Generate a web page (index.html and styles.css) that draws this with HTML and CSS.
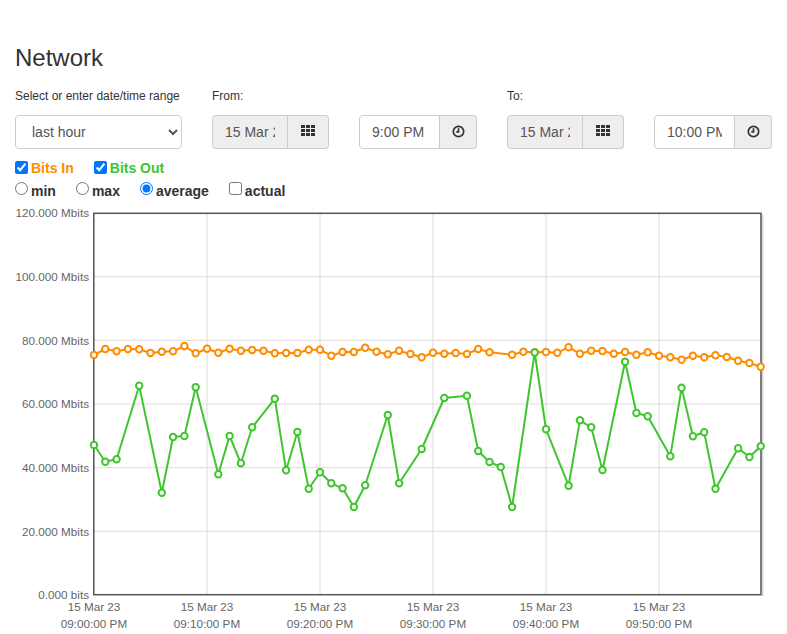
FILE: index.html
```html
<!DOCTYPE html>
<html>
<head>
<meta charset="utf-8">
<title>Network</title>
<link rel="stylesheet" href="styles.css">
</head>
<body>
<div class="page">
  <h1 class="title">Network</h1>
  <div class="range">
    <div class="field">
      <label class="lbl">Select or enter date/time range</label>
      <select class="ctl select"><option>last hour</option></select>
    </div>
    <div class="field">
      <label class="lbl">From:</label>
      <div class="pair">
        <div class="group">
          <input class="ctl grp-input date" value="15 Mar 2023" readonly>
          <span class="addon addon-cal">
            <svg class="ico-grid" width="14" height="11" viewBox="0 0 14 11"><rect x="0" y="0" width="4" height="3"/><rect x="5" y="0" width="4" height="3"/><rect x="10" y="0" width="4" height="3"/><rect x="0" y="4" width="4" height="3"/><rect x="5" y="4" width="4" height="3"/><rect x="10" y="4" width="4" height="3"/><rect x="0" y="8" width="4" height="3"/><rect x="5" y="8" width="4" height="3"/><rect x="10" y="8" width="4" height="3"/></svg>
          </span>
        </div>
        <div class="group">
          <input class="ctl grp-input time" value="9:00 PM">
          <span class="addon addon-clock">
            <svg class="ico-clock" width="13" height="13" viewBox="0 0 13 13"><circle cx="6.5" cy="6.5" r="5.2"/><path d="M6.5 3.2V6.9H4.3"/></svg>
          </span>
        </div>
      </div>
    </div>
    <div class="field">
      <label class="lbl">To:</label>
      <div class="pair">
        <div class="group">
          <input class="ctl grp-input date" value="15 Mar 2023" readonly>
          <span class="addon addon-cal">
            <svg class="ico-grid" width="14" height="11" viewBox="0 0 14 11"><rect x="0" y="0" width="4" height="3"/><rect x="5" y="0" width="4" height="3"/><rect x="10" y="0" width="4" height="3"/><rect x="0" y="4" width="4" height="3"/><rect x="5" y="4" width="4" height="3"/><rect x="10" y="4" width="4" height="3"/><rect x="0" y="8" width="4" height="3"/><rect x="5" y="8" width="4" height="3"/><rect x="10" y="8" width="4" height="3"/></svg>
          </span>
        </div>
        <div class="group">
          <input class="ctl grp-input time" value="10:00 PM">
          <span class="addon addon-clock">
            <svg class="ico-clock" width="13" height="13" viewBox="0 0 13 13"><circle cx="6.5" cy="6.5" r="5.2"/><path d="M6.5 3.2V6.9H4.3"/></svg>
          </span>
        </div>
      </div>
    </div>
  </div>
  <div class="opts opts-series">
    <label class="opt"><input type="checkbox" checked class="box"><span class="in">Bits In</span></label>
    <label class="opt"><input type="checkbox" checked class="box"><span class="out">Bits Out</span></label>
  </div>
  <div class="opts opts-mode">
    <label class="opt"><input type="radio" name="mode" class="box2">min</label>
    <label class="opt"><input type="radio" name="mode" class="box2">max</label>
    <label class="opt"><input type="radio" name="mode" class="box2" checked>average</label>
    <label class="opt"><input type="checkbox" class="box2">actual</label>
  </div>
</div>
<svg class="chart" width="787" height="433" viewBox="0 201 787 433">
  <defs>
    <marker id="mo" markerWidth="12" markerHeight="12" refX="6" refY="6" markerUnits="userSpaceOnUse"><circle class="mk-in" cx="6" cy="6" r="3.2"/></marker>
    <marker id="mg" markerWidth="12" markerHeight="12" refX="6" refY="6" markerUnits="userSpaceOnUse"><circle class="mk-out" cx="6" cy="6" r="3.2"/></marker>
  </defs>
  <g class="grid">
    <line x1="94" y1="276.7" x2="761" y2="276.7"/>
    <line x1="94" y1="340.3" x2="761" y2="340.3"/>
    <line x1="94" y1="404" x2="761" y2="404"/>
    <line x1="94" y1="467.7" x2="761" y2="467.7"/>
    <line x1="94" y1="531.3" x2="761" y2="531.3"/>
    <line x1="207" y1="213" x2="207" y2="595"/>
    <line x1="320" y1="213" x2="320" y2="595"/>
    <line x1="433" y1="213" x2="433" y2="595"/>
    <line x1="546" y1="213" x2="546" y2="595"/>
    <line x1="659" y1="213" x2="659" y2="595"/>
  </g>
  <line class="shadow" x1="762.6" y1="214.5" x2="762.6" y2="596"/>
  <rect class="frame" x="93.8" y="213.3" width="667.2" height="381.4"/>
  <g class="ylab">
    <text x="89" y="217.3">120.000 Mbits</text>
    <text x="89" y="281">100.000 Mbits</text>
    <text x="89" y="344.6">80.000 Mbits</text>
    <text x="89" y="408.3">60.000 Mbits</text>
    <text x="89" y="472">40.000 Mbits</text>
    <text x="89" y="535.6">20.000 Mbits</text>
    <text x="89" y="599.3">0.000 bits</text>
  </g>
  <g class="xlab">
    <text x="94" y="611.3">15 Mar 23</text><text x="94" y="628">09:00:00 PM</text>
    <text x="207" y="611.3">15 Mar 23</text><text x="207" y="628">09:10:00 PM</text>
    <text x="320" y="611.3">15 Mar 23</text><text x="320" y="628">09:20:00 PM</text>
    <text x="433" y="611.3">15 Mar 23</text><text x="433" y="628">09:30:00 PM</text>
    <text x="546" y="611.3">15 Mar 23</text><text x="546" y="628">09:40:00 PM</text>
    <text x="659" y="611.3">15 Mar 23</text><text x="659" y="628">09:50:00 PM</text>
  </g>
  <polyline class="series-in" points="94,355 105.3,349 116.6,351.3 127.9,349 139.2,349.3 150.5,353 161.8,351.7 173.1,351.3 184.4,346 195.7,353.3 207,348.7 218.3,352.7 229.6,348.7 240.9,350.7 252.2,350 263.5,350.7 274.8,353.3 286.1,353 297.4,353 308.7,349.7 320,349.7 331.3,355.7 342.6,352 353.9,352 365.2,347.7 376.5,351.7 387.8,354.3 399.1,350.7 410.4,354 421.7,357.3 433,352.7 444.3,353.7 455.6,353 466.9,354 478.2,349 489.5,352.3 512.1,354.7 523.4,351.7 534.7,352.3 546,352 557.3,352.7 568.6,347.3 579.9,353.7 591.2,350.7 602.5,351 613.8,353.7 625.1,352 636.4,354.7 647.7,352.3 659,355.7 670.3,357.3 681.6,359.7 692.9,355.7 704.2,357.3 715.5,355.3 726.8,357 738.1,360.7 749.4,363 760.7,366.7"/>
  <polyline class="series-out" points="94,445 105.3,461.7 116.6,459.3 139.2,385.7 161.8,492.7 173.1,437 184.4,436 195.7,387.3 218.3,474.3 229.6,436 240.9,463.3 252.2,427.3 274.8,398.7 286.1,470.3 297.4,432 308.7,488.7 320,472.2 331.3,483.3 342.6,488.3 353.9,507 365.2,485.3 387.8,415 399.1,483.3 421.7,449 444.3,398 466.9,395.7 478.2,451 489.5,462 500.8,467 512.1,507 534.7,352.5 546,429.3 568.6,485.7 579.9,420.3 591.2,427.3 602.5,470 625.1,361.7 636.4,413 647.7,416.3 670.3,456.3 681.6,387.7 692.9,436.3 704.2,432.3 715.5,488.7 738.1,448.3 749.4,457 760.7,446.3"/>
</svg>
</body>
</html>
```
FILE: styles.css
```css
html, body {
  margin: 0;
  padding: 0;
  background: #fff;
}
body {
  font-family: "Liberation Sans", Arial, sans-serif;
  color: #333;
}
.page {
  padding: 0 15px;
}
.title {
  font-size: 24px;
  font-weight: 500;
  line-height: 26.4px;
  margin: 44.5px 0 0;
}
.range {
  display: flex;
  gap: 30px;
  margin-top: 18px;
}
.field {
  display: flex;
  flex-direction: column;
}
.lbl {
  font-size: 12px;
  line-height: 15px;
  margin-bottom: 11px;
}
.ctl {
  height: 34px;
  box-sizing: border-box;
  border: 1px solid #ccc;
  font: 14px "Liberation Sans", Arial, sans-serif;
  color: #555;
  padding: 6px 12px;
  margin: 0;
  outline: none;
}
.select {
  width: 167px;
  border-radius: 4px;
  background: #fff;
}
.pair {
  display: flex;
  gap: 30px;
}
.group {
  display: flex;
}
.grp-input {
  border-radius: 4px 0 0 4px;
}
.date {
  width: 76px;
  background: #eee;
}
.time {
  width: 81px;
  background: #fff;
}
.addon {
  display: flex;
  align-items: center;
  justify-content: center;
  height: 34px;
  box-sizing: border-box;
  border: 1px solid #ccc;
  border-left: 0;
  background: #eee;
  border-radius: 0 4px 4px 0;
}
.addon-cal {
  width: 41px;
}
.addon-clock {
  width: 37px;
}
.ico-grid {
  fill: #333;
  margin-bottom: 3px;
}
.ico-clock {
  fill: none;
  stroke: #333;
  stroke-width: 1.7;
  margin-bottom: 1px;
}
.opts {
  display: flex;
  gap: 20px;
  font-size: 14px;
  font-weight: bold;
  line-height: 20px;
}
.opts-series {
  margin-top: 9px;
}
.opts-mode {
  margin-top: 3px;
}
.opt {
  display: inline-block;
  white-space: nowrap;
}
.box {
  margin: 0 3px 0 0;
  vertical-align: -1px;
}
.box2 {
  margin: 0 3px 0 0;
  vertical-align: 1px;
}
.in {
  color: #ff8c00;
}
.out {
  color: #3fc62e;
}
.chart {
  display: block;
}
.grid line {
  stroke: #dcdcdc;
  stroke-width: 1;
}
.frame {
  fill: none;
  stroke: #555;
  stroke-width: 1.5;
}
.shadow {
  stroke: #d4d4d4;
  stroke-width: 1.5;
}
.ylab text {
  font: 11.7px "Liberation Sans", Arial, sans-serif;
  fill: #666;
  text-anchor: end;
}
.xlab text {
  font: 11.7px "Liberation Sans", Arial, sans-serif;
  fill: #666;
  text-anchor: middle;
}
.series-in {
  fill: none;
  stroke: #ff8c00;
  stroke-width: 2;
  stroke-linejoin: round;
  marker-start: url(#mo);
  marker-mid: url(#mo);
  marker-end: url(#mo);
}
.series-out {
  fill: none;
  stroke: #3fc62e;
  stroke-width: 2;
  stroke-linejoin: round;
  marker-start: url(#mg);
  marker-mid: url(#mg);
  marker-end: url(#mg);
}
.mk-in {
  fill: #fff;
  stroke: #ff8c00;
  stroke-width: 2;
}
.mk-out {
  fill: #fff;
  stroke: #3fc62e;
  stroke-width: 2;
}
```
